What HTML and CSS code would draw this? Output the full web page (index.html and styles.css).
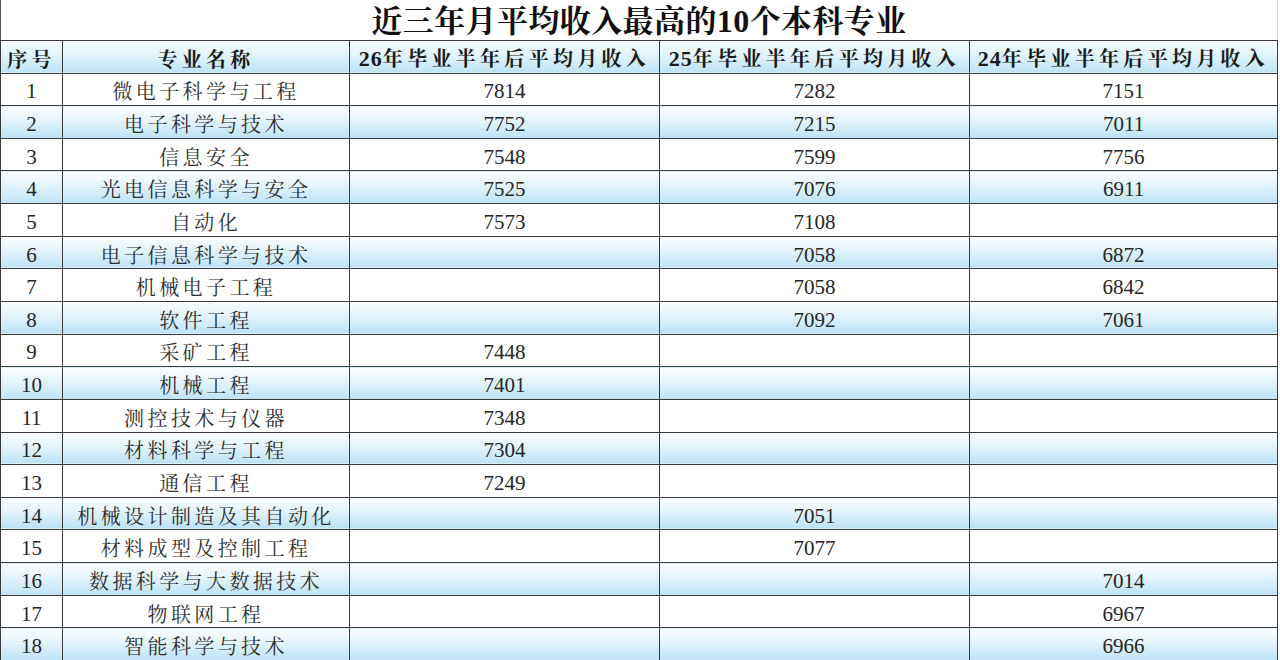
FILE: index.html
```html
<!DOCTYPE html>
<html lang="zh-CN">
<head>
<meta charset="utf-8">
<title>近三年月平均收入最高的10个本科专业</title>
<link rel="stylesheet" href="styles.css">
</head>
<body>
<table class="sheet">
  <colgroup>
    <col class="c-no"><col class="c-name"><col class="c-y"><col class="c-y"><col class="c-y4">
  </colgroup>
  <tr class="title-row"><td colspan="5" class="title">近三年月平均收入最高的<span class="num">10</span>个本科专业</td></tr>
  <tr class="head">
    <th>序号</th><th>专业名称</th><th><span class="num">26</span>年毕业半年后平均月收入</th><th><span class="num">25</span>年毕业半年后平均月收入</th><th><span class="num">24</span>年毕业半年后平均月收入</th>
  </tr>
  <tr><td class="n">1</td><td class="m">微电子科学与工程</td><td class="n">7814</td><td class="n">7282</td><td class="n">7151</td></tr>
  <tr class="blue"><td class="n">2</td><td class="m">电子科学与技术</td><td class="n">7752</td><td class="n">7215</td><td class="n">7011</td></tr>
  <tr><td class="n">3</td><td class="m">信息安全</td><td class="n">7548</td><td class="n">7599</td><td class="n">7756</td></tr>
  <tr class="blue"><td class="n">4</td><td class="m">光电信息科学与安全</td><td class="n">7525</td><td class="n">7076</td><td class="n">6911</td></tr>
  <tr><td class="n">5</td><td class="m">自动化</td><td class="n">7573</td><td class="n">7108</td><td class="n"></td></tr>
  <tr class="blue"><td class="n">6</td><td class="m">电子信息科学与技术</td><td class="n"></td><td class="n">7058</td><td class="n">6872</td></tr>
  <tr><td class="n">7</td><td class="m">机械电子工程</td><td class="n"></td><td class="n">7058</td><td class="n">6842</td></tr>
  <tr class="blue"><td class="n">8</td><td class="m">软件工程</td><td class="n"></td><td class="n">7092</td><td class="n">7061</td></tr>
  <tr><td class="n">9</td><td class="m">采矿工程</td><td class="n">7448</td><td class="n"></td><td class="n"></td></tr>
  <tr class="blue"><td class="n">10</td><td class="m">机械工程</td><td class="n">7401</td><td class="n"></td><td class="n"></td></tr>
  <tr><td class="n">11</td><td class="m">测控技术与仪器</td><td class="n">7348</td><td class="n"></td><td class="n"></td></tr>
  <tr class="blue"><td class="n">12</td><td class="m">材料科学与工程</td><td class="n">7304</td><td class="n"></td><td class="n"></td></tr>
  <tr><td class="n">13</td><td class="m">通信工程</td><td class="n">7249</td><td class="n"></td><td class="n"></td></tr>
  <tr class="blue"><td class="n">14</td><td class="m">机械设计制造及其自动化</td><td class="n"></td><td class="n">7051</td><td class="n"></td></tr>
  <tr><td class="n">15</td><td class="m">材料成型及控制工程</td><td class="n"></td><td class="n">7077</td><td class="n"></td></tr>
  <tr class="blue"><td class="n">16</td><td class="m">数据科学与大数据技术</td><td class="n"></td><td class="n"></td><td class="n">7014</td></tr>
  <tr><td class="n">17</td><td class="m">物联网工程</td><td class="n"></td><td class="n"></td><td class="n">6967</td></tr>
  <tr class="blue"><td class="n">18</td><td class="m">智能科学与技术</td><td class="n"></td><td class="n"></td><td class="n">6966</td></tr>
</table>
</body>
</html>
```

FILE: styles.css
```css
html, body {
  margin: 0;
  padding: 0;
  background: #ffffff;
}
body {
  font-family: "Noto Serif CJK SC", "Noto Sans CJK SC", serif;
  color: #2a2a2a;
  overflow: hidden;
}
.num, .n {
  font-family: "Liberation Serif", "Times New Roman", "DejaVu Serif", serif;
}
.sheet {
  border-collapse: collapse;
  table-layout: fixed;
  width: 1277px;
}
.c-no { width: 62px; }
.c-name { width: 287px; }
.c-y { width: 310px; }
.c-y4 { width: 308px; }

.sheet tr { height: 32.65px; }
.sheet tr.title-row { height: 40px; }
.sheet tr.head { height: 33px; }

.sheet td, .sheet th {
  border: 1px solid #3a3a3a;
  padding: 4px 0 0 0;
  text-align: center;
  vertical-align: middle;
  white-space: nowrap;
  overflow: hidden;
  line-height: 22px;
}
.title-row td.title {
  border-top: none;
  border-left: 1px solid #555;
  border-right: 1px solid #d8d8d8;
  border-bottom: 1px solid #3a3a3a;
  font-size: 31px;
  font-weight: bold;
  color: #111;
  line-height: 32px;
  padding: 1px 0 0 0;
  overflow: visible;
  letter-spacing: 0.4px;
}
.title .num {
  font-size: 32px;
}
.head th {
  font-size: 20px;
  font-weight: bold;
  letter-spacing: 4.3px;
  color: #1a1a1a;
  background: linear-gradient(to bottom, #f7fcff 0%, #e2f3fb 45%, #bfe3f5 100%);
}
.head th .num {
  font-size: 22px;
  letter-spacing: 1px;
}
.n {
  font-size: 21px;
  color: #262626;
}
.m {
  font-size: 20px;
  letter-spacing: 3.4px;
  color: #2e2e2e;
}
.blue td {
  background: linear-gradient(to bottom, #fbfdff 0%, #e3f3fb 45%, #bde2f5 100%);
}
```
